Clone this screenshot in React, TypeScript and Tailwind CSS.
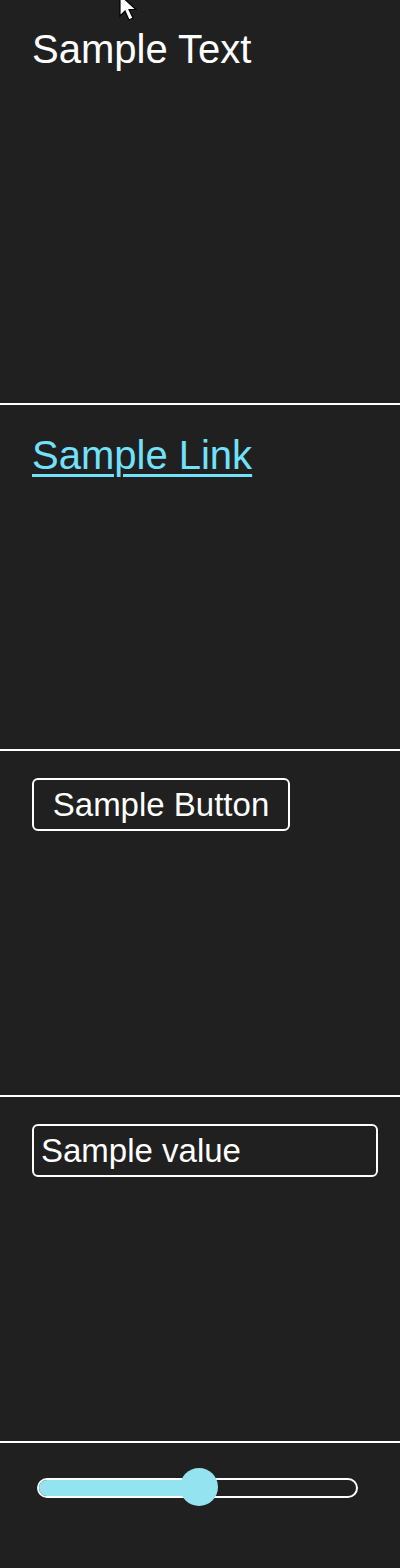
import React from "react";

const font = { fontFamily: '"Liberation Sans", Arial, sans-serif' };

export default function App() {
  return (
    <div className="relative w-[400px] h-[1568px] bg-[#202020] text-white overflow-hidden" style={font}>
      <section className="h-[403px] pt-[26px] pl-[32px]">
        <p className="text-[40px] leading-[46px] text-white">Sample Text</p>
      </section>
      <div className="h-[2px] bg-white" />
      <section className="h-[344px] pt-[27px] pl-[32px]">
        <a href="#" className="text-[40px] leading-[46px] text-[#72e1fb] underline decoration-[3px] underline-offset-[5px]">
          Sample Link
        </a>
      </section>
      <div className="h-[2px] bg-white" />
      <section className="h-[344px] pt-[27px] pl-[32px]">
        <button className="w-[258px] h-[53px] border-2 border-white rounded-[6px] text-[33px] leading-[38px] text-white bg-transparent flex items-center justify-center">
          Sample Button
        </button>
      </section>
      <div className="h-[2px] bg-white" />
      <section className="h-[344px] pt-[27px] pl-[32px]">
        <div className="w-[346px] h-[53px] border-2 border-white rounded-[6px] text-[33px] leading-[38px] text-white flex items-center pl-[7px]">
          Sample value
        </div>
      </section>
      <div className="h-[2px] bg-white" />
      <section className="pt-[35px] pl-[37px]">
        <div className="relative w-[321px] h-[20px] border-2 border-white rounded-full">
          <div className="absolute left-0 top-0 bottom-0 w-[160px] bg-[#94e3f0] rounded-l-full" />
          <div className="absolute left-[141px] top-[-12px] w-[38px] h-[38px] rounded-full bg-[#94e3f0]" />
        </div>
      </section>
      <svg className="absolute left-[119px] top-[-6px]" width="24" height="32" viewBox="0 0 24 32">
        <path d="M1 1 L1 22 L6 17 L10 26 L14 24 L10 15.5 L17 15.5 Z" fill="white" stroke="black" strokeWidth="1.2" strokeLinejoin="miter" />
      </svg>
    </div>
  );
}
